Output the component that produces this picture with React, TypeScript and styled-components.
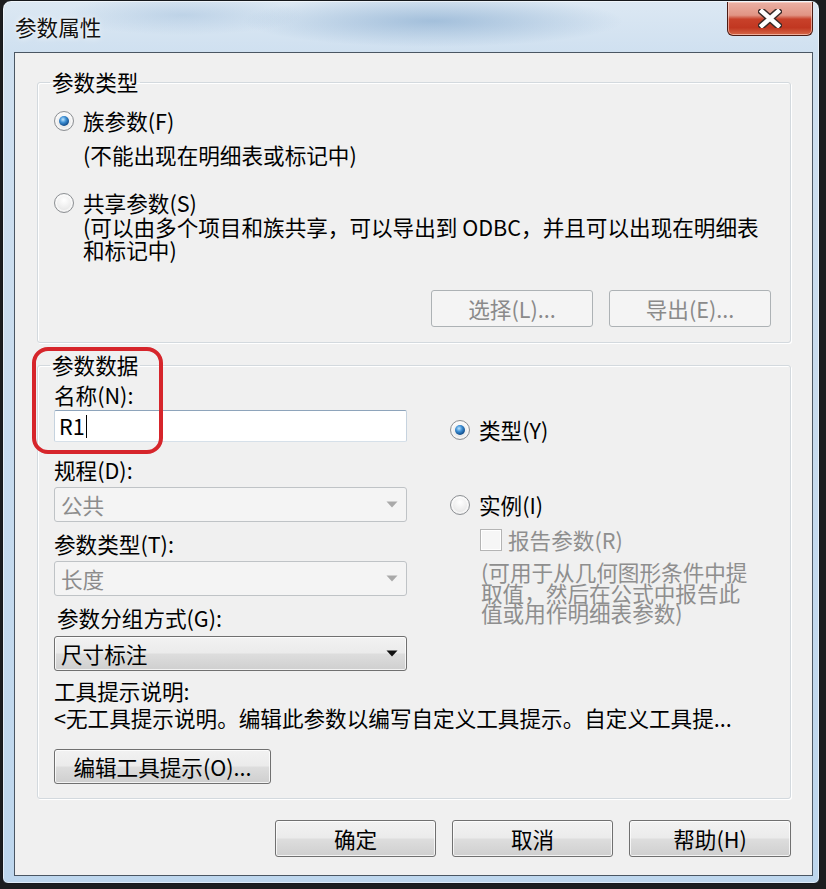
import React from "react";
import styled, { createGlobalStyle, css } from "styled-components";

const FONT = `"Noto Sans CJK SC", "Noto Sans", "DejaVu Sans", sans-serif`;

const GlobalStyle = createGlobalStyle`
  html, body {
    margin: 0;
    padding: 0;
    background: #1c1d1f;
    width: 826px;
    height: 889px;
    overflow: hidden;
  }
  body {
    font-family: ${FONT};
    font-size: 21.6px;
    color: #000;
  }
  * { box-sizing: border-box; }
`;

const Window = styled.div`
  margin: 0 6px 0 2px;
  height: 884px;
  border: 1px solid #15181c;
  border-radius: 9px 9px 6px 6px;
  display: flex;
  flex-direction: column;
  background:
    radial-gradient(ellipse 190px 26px at 430px 20px, rgba(120, 160, 200, 0.55), rgba(120, 160, 200, 0) 100%),
    radial-gradient(ellipse 120px 20px at 180px 14px, rgba(140, 175, 210, 0.35), rgba(140, 175, 210, 0) 100%),
    linear-gradient(to bottom, #dce8f3 0%, #cfe0f0 6%, #c9dcee 40%, #bdd6ed 100%);
  box-shadow: inset 0 0 0 1px rgba(255, 255, 255, 0.55);
`;

const TitleBar = styled.div`
  height: 51px;
  flex: none;
  display: flex;
  align-items: flex-start;
  justify-content: space-between;
  padding: 0 6px 0 12px;
`;

const Title = styled.div`
  align-self: center;
  font-size: 21.6px;
  line-height: 22px;
  color: #111;
  text-shadow: 0 0 6px rgba(255, 255, 255, 0.9), 0 0 2px rgba(255, 255, 255, 0.9);
`;

const CloseButton = styled.div`
  width: 86px;
  height: 34px;
  margin-top: 1px;
  border: 1px solid #4b1c14;
  border-top: none;
  border-radius: 0 0 6px 6px;
  display: flex;
  align-items: center;
  justify-content: center;
  background: linear-gradient(
    to bottom,
    #eab1a5 0%,
    #e19484 40%,
    #c8412a 52%,
    #c13721 78%,
    #d66848 100%
  );
  box-shadow: inset 0 0 0 1px rgba(255, 220, 210, 0.6);
`;

const Client = styled.div`
  position: relative;
  flex: 1;
  margin: 0 6px 8px 11px;
  border: 1px solid #4a5663;
  background: #f0f0f0;
  padding: 18px 21px 18px 22px;
  display: flex;
  flex-direction: column;
`;

const Group = styled.fieldset<{ $pt: number; $pb: number }>`
  margin: 0;
  min-width: 0;
  border: 1px solid #d3d9de;
  border-radius: 3px;
  box-shadow: inset 1px 1px 0 #ffffff, 1px 1px 0 #ffffff;
  padding: ${(p) => p.$pt}px 19px ${(p) => p.$pb}px 16px;
  & + & {
    margin-top: 11px;
  }
`;

const Legend = styled.legend`
  margin-left: -4px;
  padding: 0 2px;
  line-height: 22px;
  font-size: 21.6px;
  color: #000;
`;

const RadioRow = styled.div<{ $mt?: number }>`
  display: flex;
  align-items: center;
  height: 22px;
  margin-top: ${(p) => p.$mt ?? 0}px;
  gap: 9px;
  line-height: 22px;
`;

const RadioMark = styled.span<{ $checked?: boolean }>`
  position: relative;
  width: 20px;
  height: 20px;
  flex: none;
  border-radius: 50%;
  border: 1px solid #8d9094;
  background: radial-gradient(circle at 50% 35%, #ffffff 0%, #ececec 55%, #d2d2d2 100%);
  box-shadow: inset 0 0 0 2px rgba(255, 255, 255, 0.6);
  ${(p) =>
    p.$checked &&
    css`
      &::after {
        content: "";
        position: absolute;
        left: 4px;
        top: 4px;
        width: 10px;
        height: 10px;
        border-radius: 50%;
        background: radial-gradient(circle at 40% 35%, #bfe6ff 0%, #3d8fd4 35%, #14508f 70%, #0b2f57 100%);
      }
    `}
`;

const Note = styled.div<{ $indent?: number; $mt?: number; $lh?: number; $gray?: boolean }>`
  margin-left: ${(p) => p.$indent ?? 0}px;
  margin-top: ${(p) => p.$mt ?? 0}px;
  line-height: ${(p) => p.$lh ?? 22}px;
  white-space: nowrap;
  color: ${(p) => (p.$gray ? "#8e8e8e" : "#000")};
`;

const ButtonRow = styled.div<{ $mt: number }>`
  display: flex;
  justify-content: flex-end;
  gap: 16px;
  margin-top: ${(p) => p.$mt}px;
`;

const Button = styled.div<{ $disabled?: boolean; $w: number; $h?: number }>`
  width: ${(p) => p.$w}px;
  height: ${(p) => p.$h ?? 37}px;
  border-radius: 3px;
  display: flex;
  align-items: center;
  justify-content: center;
  line-height: 22px;
  white-space: nowrap;
  ${(p) =>
    p.$disabled
      ? css`
          border: 1px solid #adb2b5;
          background: #f4f4f4;
          color: #8a8a8a;
        `
      : css`
          border: 1px solid #707070;
          color: #000;
          background: linear-gradient(to bottom, #f2f2f2 0%, #ebebeb 48%, #dddddd 52%, #cfcfcf 100%);
          box-shadow: inset 0 0 0 1px rgba(255, 255, 255, 0.75);
        `}
`;

const DataGrid = styled.div`
  display: grid;
  grid-template-columns: 353px 1fr;
  column-gap: 43px;
  padding-top: 8px;
`;

const Column = styled.div`
  display: flex;
  flex-direction: column;
`;

const Label = styled.div<{ $mt?: number; $ml?: number }>`
  line-height: 22px;
  height: 22px;
  white-space: nowrap;
  margin-top: ${(p) => p.$mt ?? 0}px;
  margin-left: ${(p) => p.$ml ?? 0}px;
`;

const TextBox = styled.div`
  margin-top: 4px;
  height: 32px;
  background: #fff;
  border: 1px solid;
  border-color: #8ea4bb #c6d3df #d6e0e9 #c6d3df;
  border-radius: 2px;
  display: flex;
  align-items: center;
  padding-left: 4px;
  line-height: 22px;
`;

const Caret = styled.span`
  display: inline-block;
  width: 1px;
  height: 23px;
  background: #000;
  margin-left: 1px;
`;

const Select = styled.div<{ $disabled?: boolean; $mt: number }>`
  margin-top: ${(p) => p.$mt}px;
  height: 35px;
  border-radius: 3px;
  display: flex;
  align-items: center;
  justify-content: space-between;
  padding: 0 8px 0 6px;
  line-height: 22px;
  ${(p) =>
    p.$disabled
      ? css`
          border: 1px solid #bfc3c6;
          background: #f4f4f4;
          color: #8c8c8c;
        `
      : css`
          border: 1px solid #707070;
          color: #000;
          background: linear-gradient(to bottom, #f2f2f2 0%, #ebebeb 48%, #dddddd 52%, #cfcfcf 100%);
          box-shadow: inset 0 0 0 1px rgba(255, 255, 255, 0.75);
        `}
`;

const CheckRow = styled.div`
  display: flex;
  align-items: center;
  gap: 6px;
  margin-top: 13px;
  margin-left: 30px;
  height: 22px;
  line-height: 22px;
  color: #8e8e8e;
`;

const CheckBox = styled.span`
  width: 22px;
  height: 22px;
  flex: none;
  border: 1px solid #b4b4b4;
  background: #f6f6f6;
  box-shadow: inset 0 0 0 1px #ffffff;
`;

const Annotation = styled.div`
  position: absolute;
  left: 17px;
  top: 294px;
  width: 131px;
  height: 107px;
  border: 4px solid #d6252b;
  border-radius: 16px;
  pointer-events: none;
`;

const Arrow = ({ color }: { color: string }) => (
  <svg width="12" height="7" viewBox="0 0 12 7">
    <path d="M0.5 0.5 L11.5 0.5 L6 6.5 Z" fill={color} />
  </svg>
);

const CloseGlyph = () => (
  <svg width="24" height="19" viewBox="0 0 24 19">
    <path d="M4 2.5 L20 16.5 M20 2.5 L4 16.5" stroke="#3a2a28" strokeWidth="7.5" strokeLinecap="square" fill="none" />
    <path d="M4 2.5 L20 16.5 M20 2.5 L4 16.5" stroke="#ffffff" strokeWidth="4.5" strokeLinecap="square" fill="none" />
  </svg>
);

export default function App() {
  return (
    <>
      <GlobalStyle />
      <Window>
        <TitleBar>
          <Title>参数属性</Title>
          <CloseButton>
            <CloseGlyph />
          </CloseButton>
        </TitleBar>
        <Client>
          <Group $pt={17} $pb={15}>
            <Legend>参数类型</Legend>
            <RadioRow>
              <RadioMark $checked />
              <span>族参数(F)</span>
            </RadioRow>
            <Note $indent={29} $mt={12}>(不能出现在明细表或标记中)</Note>
            <RadioRow $mt={26}>
              <RadioMark />
              <span>共享参数(S)</span>
            </RadioRow>
            <Note $indent={29} $mt={1} $lh={23}>
              (可以由多个项目和族共享，可以导出到 ODBC，并且可以出现在明细表
              <br />
              和标记中)
            </Note>
            <ButtonRow $mt={29}>
              <Button $disabled $w={162}>选择(L)...</Button>
              <Button $disabled $w={162}>导出(E)...</Button>
            </ButtonRow>
          </Group>

          <Group $pt={0} $pb={14}>
            <Legend>参数数据</Legend>
            <DataGrid>
              <Column>
                <Label>名称(N):</Label>
                <TextBox>
                  <span>R1</span>
                  <Caret />
                </TextBox>
                <Label $mt={17}>规程(D):</Label>
                <Select $disabled $mt={6}>
                  <span>公共</span>
                  <Arrow color="#a9a9a9" />
                </Select>
                <Label $mt={11}>参数类型(T):</Label>
                <Select $disabled $mt={6}>
                  <span>长度</span>
                  <Arrow color="#a9a9a9" />
                </Select>
                <Label $mt={11} $ml={3}>参数分组方式(G):</Label>
                <Select $mt={7}>
                  <span>尺寸标注</span>
                  <Arrow color="#111" />
                </Select>
              </Column>
              <Column>
                <RadioRow $mt={35}>
                  <RadioMark $checked />
                  <span>类型(Y)</span>
                </RadioRow>
                <RadioRow $mt={53}>
                  <RadioMark />
                  <span>实例(I)</span>
                </RadioRow>
                <CheckRow>
                  <CheckBox />
                  <span>报告参数(R)</span>
                </CheckRow>
                <Note $indent={31} $mt={11} $lh={20.5} $gray>
                  (可用于从几何图形条件中提
                  <br />
                  取值，然后在公式中报告此
                  <br />
                  值或用作明细表参数)
                </Note>
              </Column>
            </DataGrid>
            <Label $mt={9}>工具提示说明:</Label>
            <Label $mt={5}>{"<无工具提示说明。编辑此参数以编写自定义工具提示。自定义工具提..."}</Label>
            <ButtonRow $mt={20} style={{ justifyContent: "flex-start" }}>
              <Button $w={217} $h={35}>编辑工具提示(O)...</Button>
            </ButtonRow>
          </Group>

          <ButtonRow $mt={21}>
            <Button $w={161}>确定</Button>
            <Button $w={161}>取消</Button>
            <Button $w={162}>帮助(H)</Button>
          </ButtonRow>
          <Annotation />
        </Client>
      </Window>
    </>
  );
}
